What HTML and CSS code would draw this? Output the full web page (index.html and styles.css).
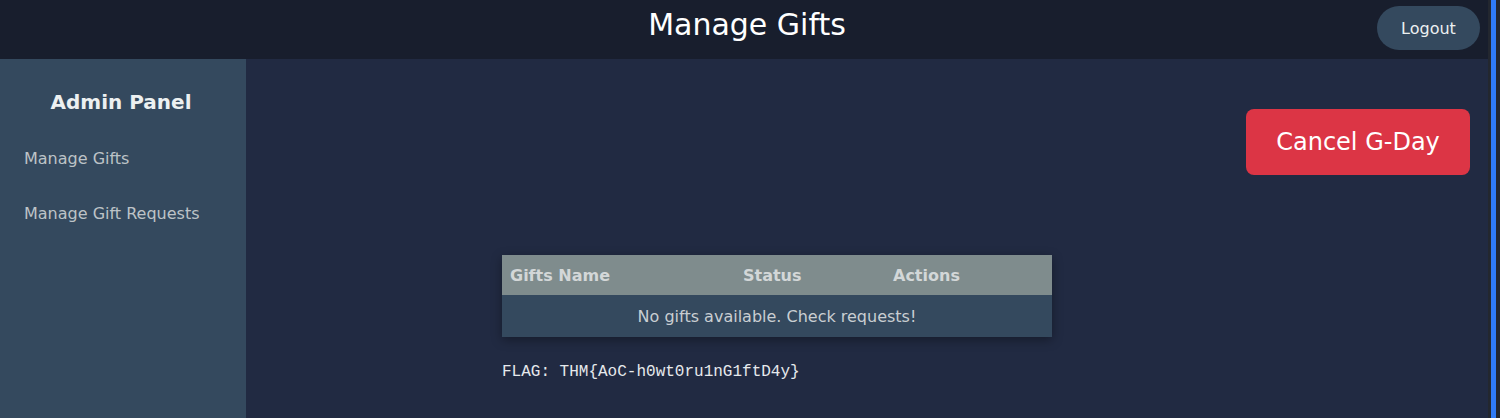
FILE: index.html
```html
<!DOCTYPE html>
<html>
<head>
<meta charset="utf-8">
<link rel="stylesheet" href="styles.css">
</head>
<body>
<div class="viewport">
  <div class="app">
    <header class="topbar">
      <h1 class="title">Manage Gifts</h1>
      <button class="logout">Logout</button>
    </header>
    <div class="layout">
      <aside class="sidebar">
        <h2 class="brand">Admin Panel</h2>
        <nav class="nav">
          <a class="nav-link">Manage Gifts</a>
          <a class="nav-link">Manage Gift Requests</a>
        </nav>
      </aside>
      <main class="main">
        <div class="actions-row">
          <button class="cancel">Cancel G-Day</button>
        </div>
        <div class="content">
          <table class="gifts">
            <thead>
              <tr>
                <th class="c-name">Gifts Name</th>
                <th class="c-status">Status</th>
                <th class="c-actions">Actions</th>
              </tr>
            </thead>
            <tbody>
              <tr><td colspan="3" class="empty">No gifts available. Check requests!</td></tr>
            </tbody>
          </table>
          <p class="flag">FLAG: THM{AoC-h0wt0ru1nG1ftD4y}</p>
        </div>
      </main>
    </div>
  </div>
  <div class="scrollbar"><div class="thumb"></div></div>
</div>
</body>
</html>
```

FILE: styles.css
```css
* { box-sizing: border-box; }
html, body { margin: 0; padding: 0; height: 100%; }
body {
  font-family: "DejaVu Sans", sans-serif;
  background: #212a42;
  color: #ecf0f1;
  overflow: hidden;
}
.viewport { display: flex; height: 418px; }
.app { flex: 1; display: flex; flex-direction: column; min-width: 0; }
.scrollbar {
  width: 12px;
  background: #23272f;
  padding: 0 4px 0 3px;
}
.thumb { height: 100%; background: #2f7bf6; }

.topbar {
  height: 59px;
  flex: none;
  background: #181e2d;
  display: flex;
  align-items: center;
  justify-content: center;
  position: relative;
}
.title {
  margin: 0 0 0 6px;
  font-size: 30px;
  font-weight: normal;
  color: #ffffff;
  line-height: 1;
  transform: translateY(-5px);
}
.logout {
  position: absolute;
  right: 8px;
  top: 6px;
  height: 44px;
  width: 103px;
  border: none;
  border-radius: 22px;
  background: #34495e;
  color: #ecf0f1;
  font-family: "DejaVu Sans", sans-serif;
  font-size: 16px;
  padding: 0;
}

.layout { flex: 1; display: flex; }
.sidebar {
  width: 246px;
  background: #34495e;
  padding: 0 24px;
}
.brand {
  margin: 31px 4px 0 0;
  text-align: center;
  font-size: 20px;
  font-weight: bold;
  color: #ecf0f1;
  line-height: 24px;
}
.nav { display: flex; flex-direction: column; margin-top: 35px; gap: 36px; }
.nav-link {
  font-size: 16px;
  line-height: 19px;
  color: #bdc3c7;
}

.main { flex: 1; padding: 50px 18px 0 256px; display: flex; flex-direction: column; }
.actions-row { display: flex; justify-content: flex-end; }
.cancel {
  width: 224px;
  height: 66px;
  border: none;
  border-radius: 8px;
  background: #dc3545;
  color: #ffffff;
  font-family: "DejaVu Sans", sans-serif;
  font-size: 24px;
  padding: 0;
}
.content { margin-top: 80px; }
.gifts {
  width: 550px;
  border-collapse: collapse;
  box-shadow: 0 3px 10px rgba(0, 0, 0, 0.35);
}
.gifts th {
  background: #7f8c8d;
  color: #d3d7d8;
  font-size: 16px;
  font-weight: bold;
  text-align: left;
  height: 40px;
  padding: 0 8px;
}
.c-name { width: 233px; }
.c-status { width: 150px; }
.gifts td.empty {
  background: #34495e;
  color: #c9ced2;
  text-align: center;
  font-size: 16px;
  height: 42px;
  padding: 0;
}
.flag {
  margin: 26px 0 0;
  font-family: "Liberation Mono", monospace;
  font-size: 16px;
  color: #e6e9ec;
}
```
